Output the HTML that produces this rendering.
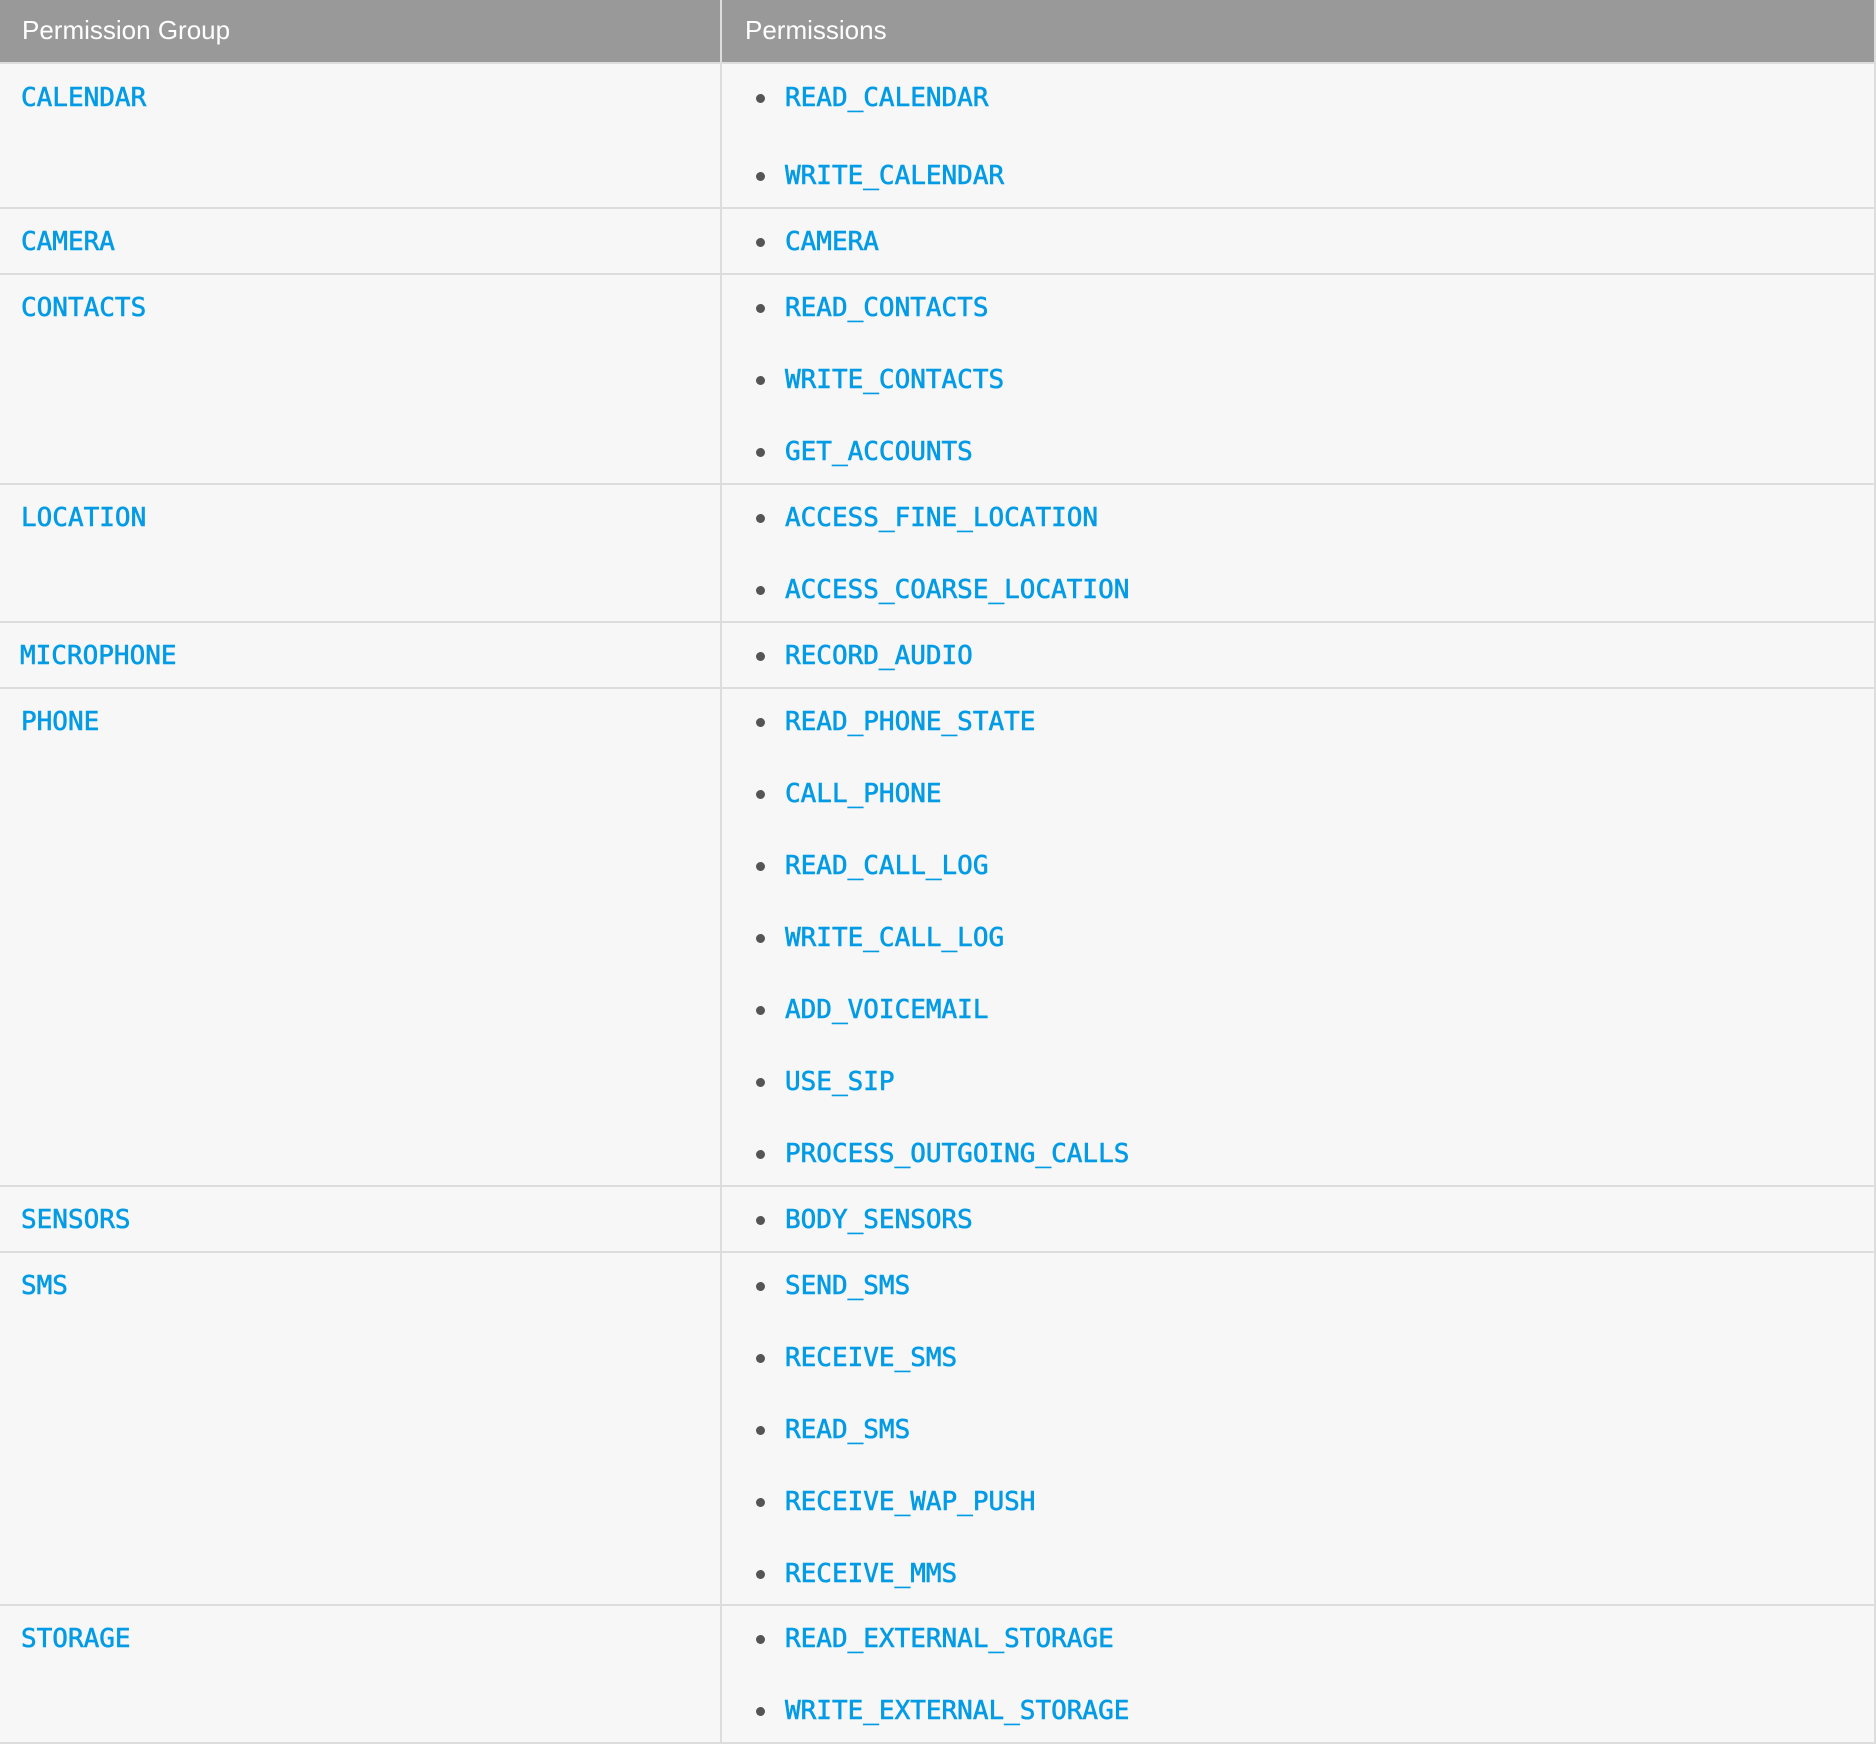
<!DOCTYPE html>
<html><head><meta charset="utf-8"><style>
html,body{margin:0;padding:0;}
body{width:1876px;height:1744px;position:relative;background:#fff;overflow:hidden;}
.hd{position:absolute;left:0;top:0;width:1876px;height:62px;background:#999;}
.hd span{position:absolute;top:13px;line-height:34px;font-family:"Liberation Sans",sans-serif;font-size:26px;color:#fff;}
.body{position:absolute;left:0;top:62px;width:1874px;height:1680px;background:#f7f7f7;}
.h{position:absolute;left:0;width:1876px;height:2px;background:#ddd;}
.v{position:absolute;top:0;width:2px;background:#ddd;}
.t{position:absolute;margin-top:2px;font-family:"DejaVu Sans Mono","Liberation Mono",monospace;font-size:26px;line-height:30px;color:#039be5;white-space:pre;-webkit-text-stroke:0.6px #039be5;}
.b{position:absolute;width:9px;height:9px;border-radius:50%;background:#555;}
</style></head><body>
<div class="body"></div>
<div class="hd"><span style="left:22px">Permission Group</span><span style="left:745px">Permissions</span></div>
<div class="v" style="left:720px;height:1744px"></div>
<div class="v" style="left:1874px;height:1744px"></div>
<div class="h" style="top:62px"></div>
<div class="h" style="top:207px"></div>
<div class="h" style="top:273px"></div>
<div class="h" style="top:483px"></div>
<div class="h" style="top:621px"></div>
<div class="h" style="top:687px"></div>
<div class="h" style="top:1185px"></div>
<div class="h" style="top:1251px"></div>
<div class="h" style="top:1604px"></div>
<div class="h" style="top:1742px"></div>

<div class="t" style="left:21px;top:81px">CALENDAR</div>
<div class="b" style="left:756px;top:94px"></div><div class="t" style="left:785px;top:81px">READ_CALENDAR</div>
<div class="b" style="left:756px;top:172px"></div><div class="t" style="left:785px;top:159px">WRITE_CALENDAR</div>

<div class="t" style="left:21px;top:225px">CAMERA</div>
<div class="b" style="left:756px;top:238px"></div><div class="t" style="left:785px;top:225px">CAMERA</div>

<div class="t" style="left:21px;top:291px">CONTACTS</div>
<div class="b" style="left:756px;top:304px"></div><div class="t" style="left:785px;top:291px">READ_CONTACTS</div>
<div class="b" style="left:756px;top:376px"></div><div class="t" style="left:785px;top:363px">WRITE_CONTACTS</div>
<div class="b" style="left:756px;top:448px"></div><div class="t" style="left:785px;top:435px">GET_ACCOUNTS</div>

<div class="t" style="left:21px;top:501px">LOCATION</div>
<div class="b" style="left:756px;top:514px"></div><div class="t" style="left:785px;top:501px">ACCESS_FINE_LOCATION</div>
<div class="b" style="left:756px;top:586px"></div><div class="t" style="left:785px;top:573px">ACCESS_COARSE_LOCATION</div>

<div class="t" style="left:20px;top:639px">MICROPHONE</div>
<div class="b" style="left:756px;top:652px"></div><div class="t" style="left:785px;top:639px">RECORD_AUDIO</div>

<div class="t" style="left:21px;top:705px">PHONE</div>
<div class="b" style="left:756px;top:718px"></div><div class="t" style="left:785px;top:705px">READ_PHONE_STATE</div>
<div class="b" style="left:756px;top:790px"></div><div class="t" style="left:785px;top:777px">CALL_PHONE</div>
<div class="b" style="left:756px;top:862px"></div><div class="t" style="left:785px;top:849px">READ_CALL_LOG</div>
<div class="b" style="left:756px;top:934px"></div><div class="t" style="left:785px;top:921px">WRITE_CALL_LOG</div>
<div class="b" style="left:756px;top:1006px"></div><div class="t" style="left:785px;top:993px">ADD_VOICEMAIL</div>
<div class="b" style="left:756px;top:1078px"></div><div class="t" style="left:785px;top:1065px">USE_SIP</div>
<div class="b" style="left:756px;top:1150px"></div><div class="t" style="left:785px;top:1137px">PROCESS_OUTGOING_CALLS</div>

<div class="t" style="left:21px;top:1203px">SENSORS</div>
<div class="b" style="left:756px;top:1216px"></div><div class="t" style="left:785px;top:1203px">BODY_SENSORS</div>

<div class="t" style="left:21px;top:1269px">SMS</div>
<div class="b" style="left:756px;top:1282px"></div><div class="t" style="left:785px;top:1269px">SEND_SMS</div>
<div class="b" style="left:756px;top:1354px"></div><div class="t" style="left:785px;top:1341px">RECEIVE_SMS</div>
<div class="b" style="left:756px;top:1426px"></div><div class="t" style="left:785px;top:1413px">READ_SMS</div>
<div class="b" style="left:756px;top:1498px"></div><div class="t" style="left:785px;top:1485px">RECEIVE_WAP_PUSH</div>
<div class="b" style="left:756px;top:1570px"></div><div class="t" style="left:785px;top:1557px">RECEIVE_MMS</div>

<div class="t" style="left:21px;top:1622px">STORAGE</div>
<div class="b" style="left:756px;top:1635px"></div><div class="t" style="left:785px;top:1622px">READ_EXTERNAL_STORAGE</div>
<div class="b" style="left:756px;top:1707px"></div><div class="t" style="left:785px;top:1694px">WRITE_EXTERNAL_STORAGE</div>
</body></html>
